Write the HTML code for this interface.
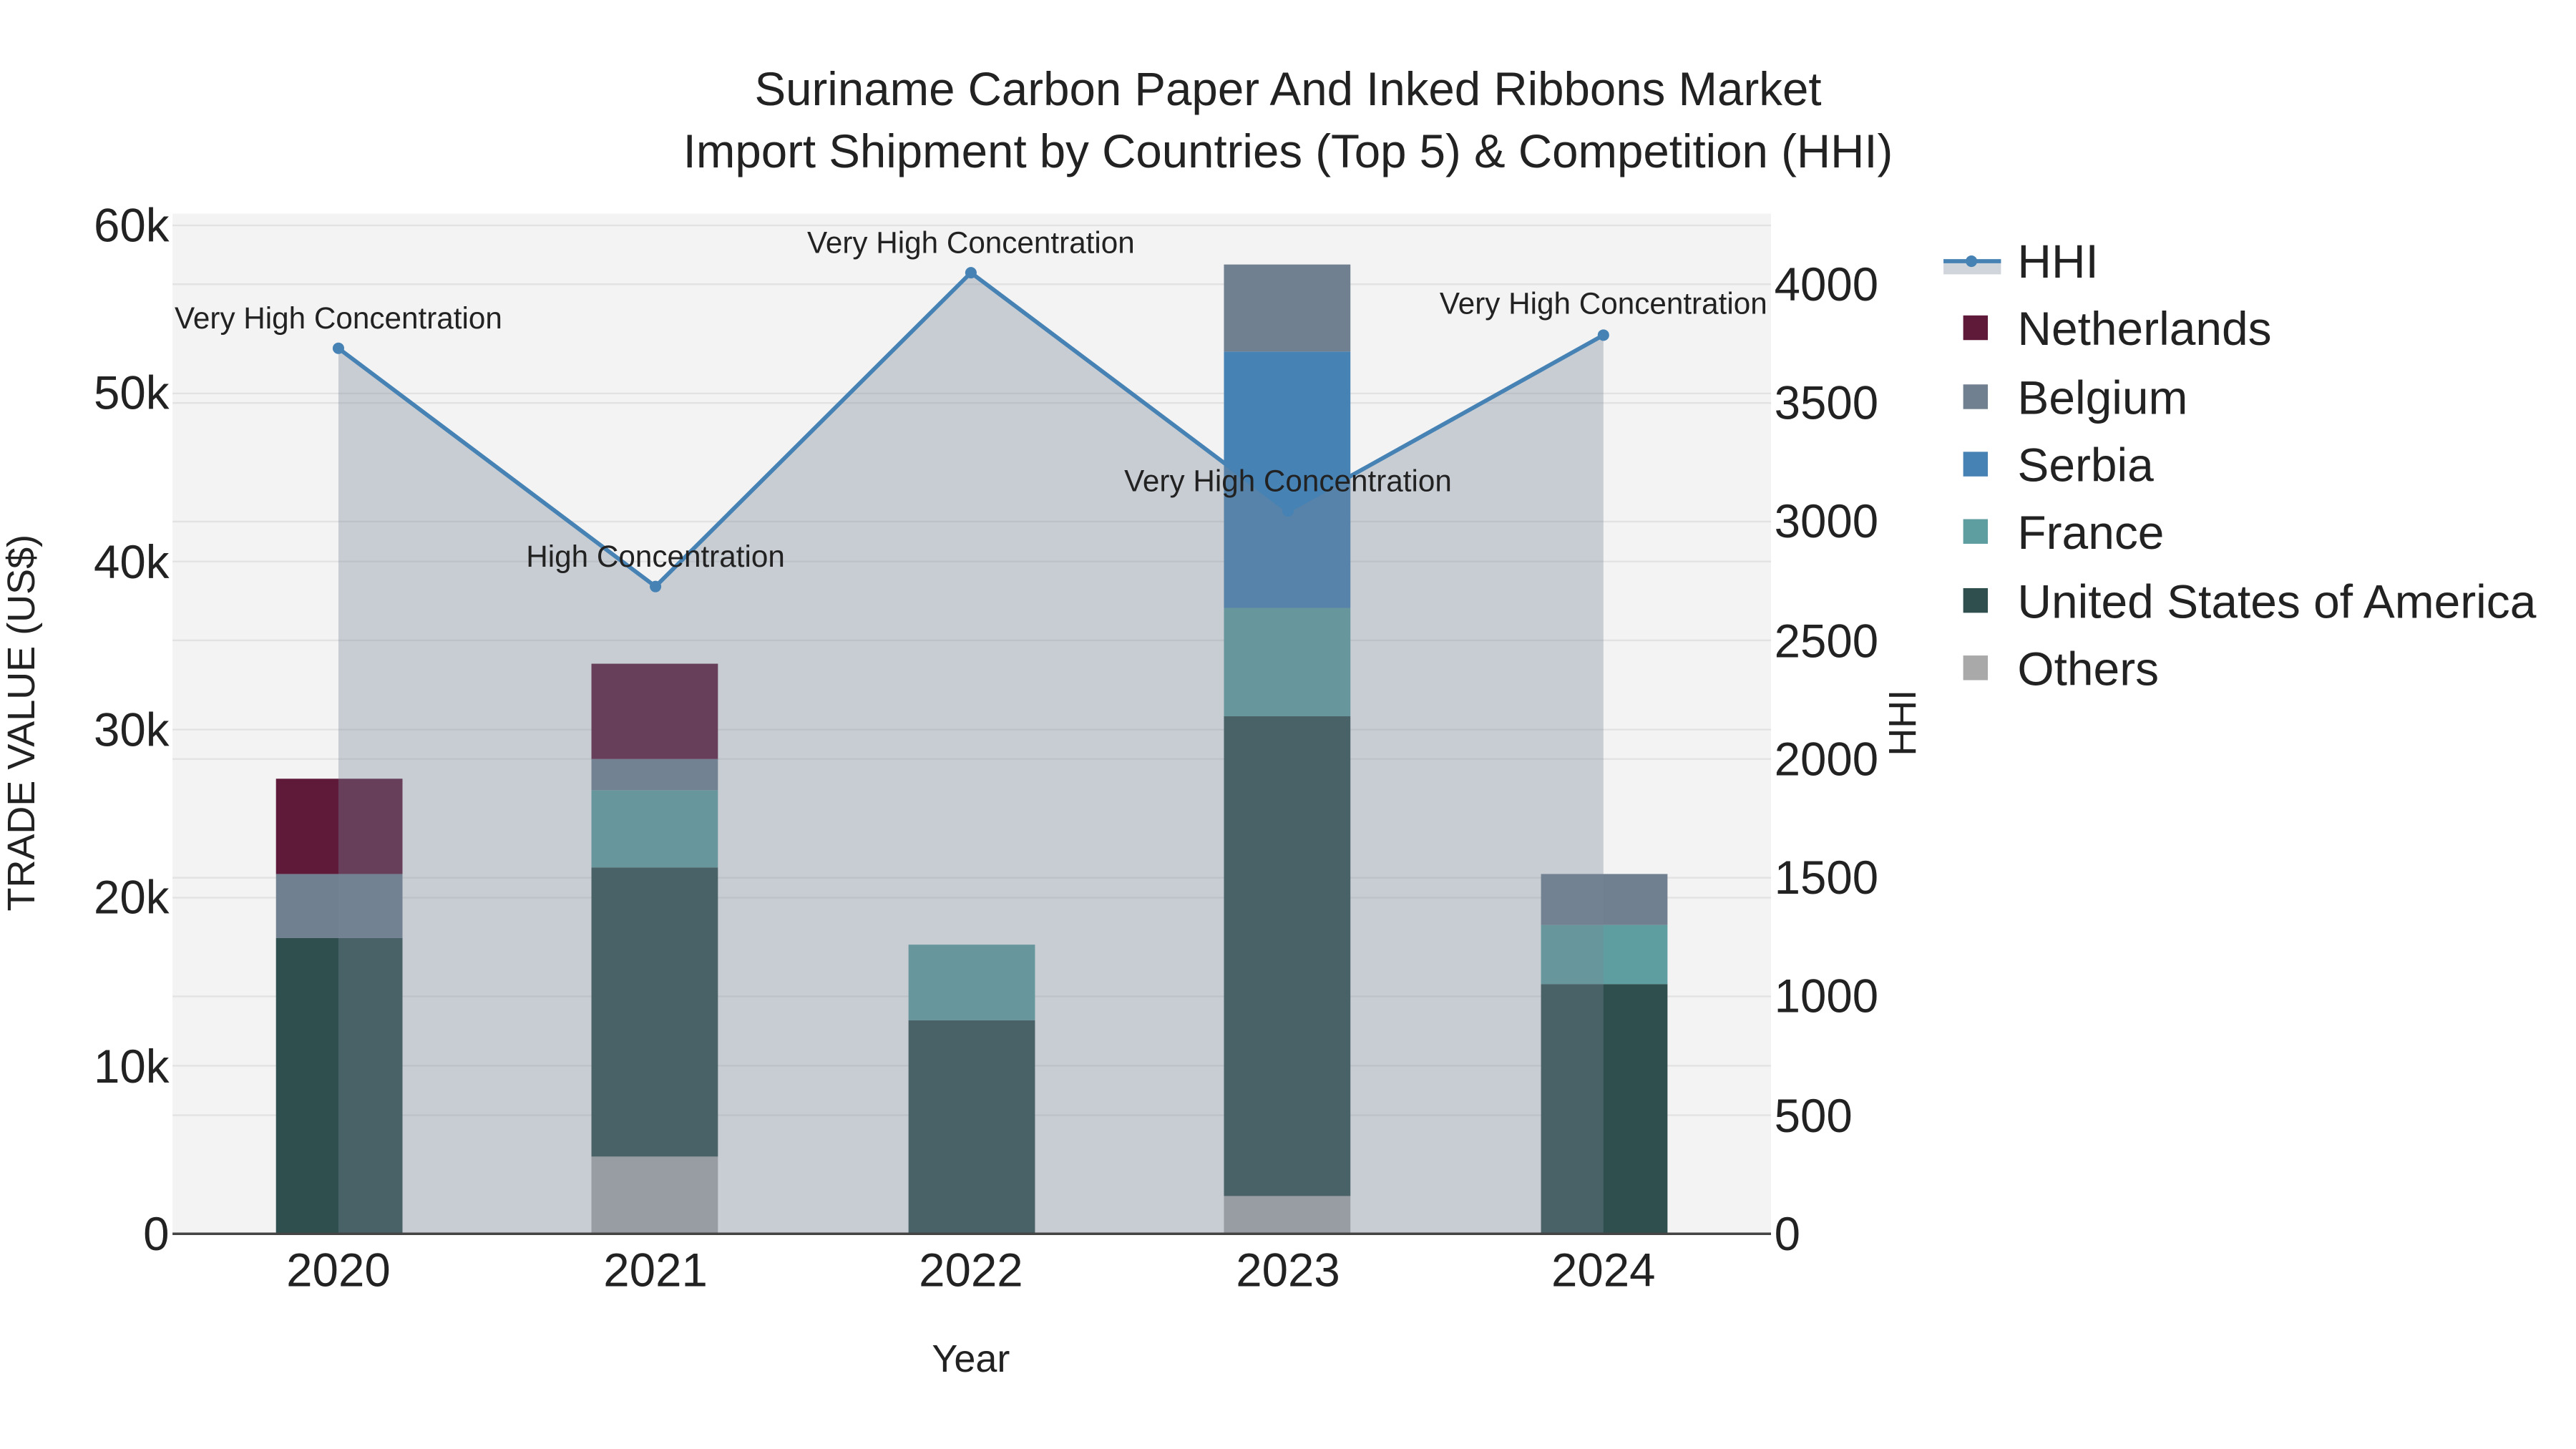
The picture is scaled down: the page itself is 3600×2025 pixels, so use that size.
<!DOCTYPE html>
<html><head><meta charset="utf-8"><style>
html,body{margin:0;padding:0;background:#fff;}
svg{display:block;}
text{font-family:"Liberation Sans",sans-serif;fill:#222;}
</style></head><body>
<svg width="3600" height="2025" viewBox="0 0 1568 882" preserveAspectRatio="none" xmlns="http://www.w3.org/2000/svg">
<rect x="0" y="0" width="1568" height="882" fill="#fff"/>
<rect x="105" y="130" width="973" height="621" fill="#f3f3f3"/>
<g stroke="#e2e2e2" stroke-width="1">
<line x1="105" x2="1078" y1="648.7" y2="648.7"/><line x1="105" x2="1078" y1="546.4" y2="546.4"/>
<line x1="105" x2="1078" y1="444.1" y2="444.1"/><line x1="105" x2="1078" y1="341.8" y2="341.8"/>
<line x1="105" x2="1078" y1="239.5" y2="239.5"/><line x1="105" x2="1078" y1="137.2" y2="137.2"/>
<line x1="105" x2="1078" y1="678.8" y2="678.8"/><line x1="105" x2="1078" y1="606.5" y2="606.5"/>
<line x1="105" x2="1078" y1="534.3" y2="534.3"/><line x1="105" x2="1078" y1="462" y2="462"/>
<line x1="105" x2="1078" y1="389.8" y2="389.8"/><line x1="105" x2="1078" y1="317.5" y2="317.5"/>
<line x1="105" x2="1078" y1="245.3" y2="245.3"/><line x1="105" x2="1078" y1="173" y2="173"/>
</g>
<g>
<rect x="168" y="571" width="77" height="180" fill="#2f4f4f"/>
<rect x="168" y="532" width="77" height="39" fill="#708090"/>
<rect x="168" y="474" width="77" height="58" fill="#5f1a3a"/>
<rect x="360" y="704" width="77" height="47" fill="#a9a9a9"/>
<rect x="360" y="528" width="77" height="176" fill="#2f4f4f"/>
<rect x="360" y="481" width="77" height="47" fill="#5f9ea0"/>
<rect x="360" y="462" width="77" height="19" fill="#708090"/>
<rect x="360" y="404" width="77" height="58" fill="#5f1a3a"/>
<rect x="553" y="621" width="77" height="130" fill="#2f4f4f"/>
<rect x="553" y="575" width="77" height="46" fill="#5f9ea0"/>
<rect x="745" y="728" width="77" height="23" fill="#a9a9a9"/>
<rect x="745" y="436" width="77" height="292" fill="#2f4f4f"/>
<rect x="745" y="370" width="77" height="66" fill="#5f9ea0"/>
<rect x="745" y="214" width="77" height="156" fill="#4682b4"/>
<rect x="745" y="161" width="77" height="53" fill="#708090"/>
<rect x="938" y="599" width="77" height="152" fill="#2f4f4f"/>
<rect x="938" y="563" width="77" height="36" fill="#5f9ea0"/>
<rect x="938" y="532" width="77" height="31" fill="#708090"/>
</g>
<polygon points="206,751 206,212 399,357 591,166 784,311 976,204 976,751" fill="rgba(119,136,153,0.35)"/>
<polyline points="206,212 399,357 591,166 784,311 976,204" fill="none" stroke="#4682b4" stroke-width="2.5"/>
<g fill="#4682b4"><circle cx="206" cy="212" r="3.5"/><circle cx="399" cy="357" r="3.5"/><circle cx="591" cy="166" r="3.5"/><circle cx="784" cy="311" r="3.5"/><circle cx="976" cy="204" r="3.5"/></g>
<line x1="105" x2="1078" y1="751" y2="751" stroke="#444" stroke-width="1.5"/>
<g font-size="18.4" text-anchor="middle">
<text x="206" y="200">Very High Concentration</text>
<text x="399" y="345">High Concentration</text>
<text x="591" y="154">Very High Concentration</text>
<text x="784" y="299">Very High Concentration</text>
<text x="976" y="191">Very High Concentration</text>
</g>
<g font-size="28.5" text-anchor="end">
<text x="103" y="761">0</text><text x="103" y="659">10k</text><text x="103" y="556">20k</text>
<text x="103" y="454">30k</text><text x="103" y="352">40k</text><text x="103" y="249">50k</text><text x="103" y="147">60k</text>
</g>
<g font-size="28.5" text-anchor="start">
<text x="1080" y="761">0</text><text x="1080" y="689">500</text><text x="1080" y="616">1000</text>
<text x="1080" y="544">1500</text><text x="1080" y="472">2000</text><text x="1080" y="400">2500</text>
<text x="1080" y="327">3000</text><text x="1080" y="255">3500</text><text x="1080" y="183">4000</text>
</g>
<g font-size="28.5" text-anchor="middle">
<text x="206" y="783">2020</text><text x="399" y="783">2021</text><text x="591" y="783">2022</text><text x="784" y="783">2023</text><text x="976" y="783">2024</text>
</g>
<text x="591" y="835" font-size="23.5" text-anchor="middle">Year</text>
<text transform="translate(21,440) rotate(-90)" font-size="23.5" text-anchor="middle">TRADE VALUE (US$)</text>
<text transform="translate(1166,440) rotate(-90)" font-size="23.5" text-anchor="middle">HHI</text>
<text x="784" y="64" font-size="28.5" text-anchor="middle">Suriname Carbon Paper And Inked Ribbons Market</text>
<text x="784" y="102" font-size="28.5" text-anchor="middle">Import Shipment by Countries (Top 5) &amp; Competition (HHI)</text>
<rect x="1183" y="159" width="35" height="8" fill="rgba(119,136,153,0.35)"/>
<line x1="1183" x2="1218" y1="159" y2="159" stroke="#4682b4" stroke-width="2.5"/>
<circle cx="1200" cy="159" r="3.5" fill="#4682b4"/>
<rect x="1195" y="192" width="15" height="15" fill="#5f1a3a"/>
<rect x="1195" y="234" width="15" height="15" fill="#708090"/>
<rect x="1195" y="275" width="15" height="15" fill="#4682b4"/>
<rect x="1195" y="316" width="15" height="15" fill="#5f9ea0"/>
<rect x="1195" y="358" width="15" height="15" fill="#2f4f4f"/>
<rect x="1195" y="399" width="15" height="15" fill="#a9a9a9"/>
<g font-size="28.7">
<text x="1228" y="169">HHI</text>
<text x="1228" y="210">Netherlands</text>
<text x="1228" y="252">Belgium</text>
<text x="1228" y="293">Serbia</text>
<text x="1228" y="334">France</text>
<text x="1228" y="376">United States of America</text>
<text x="1228" y="417">Others</text>
</g>
</svg>
</body></html>
